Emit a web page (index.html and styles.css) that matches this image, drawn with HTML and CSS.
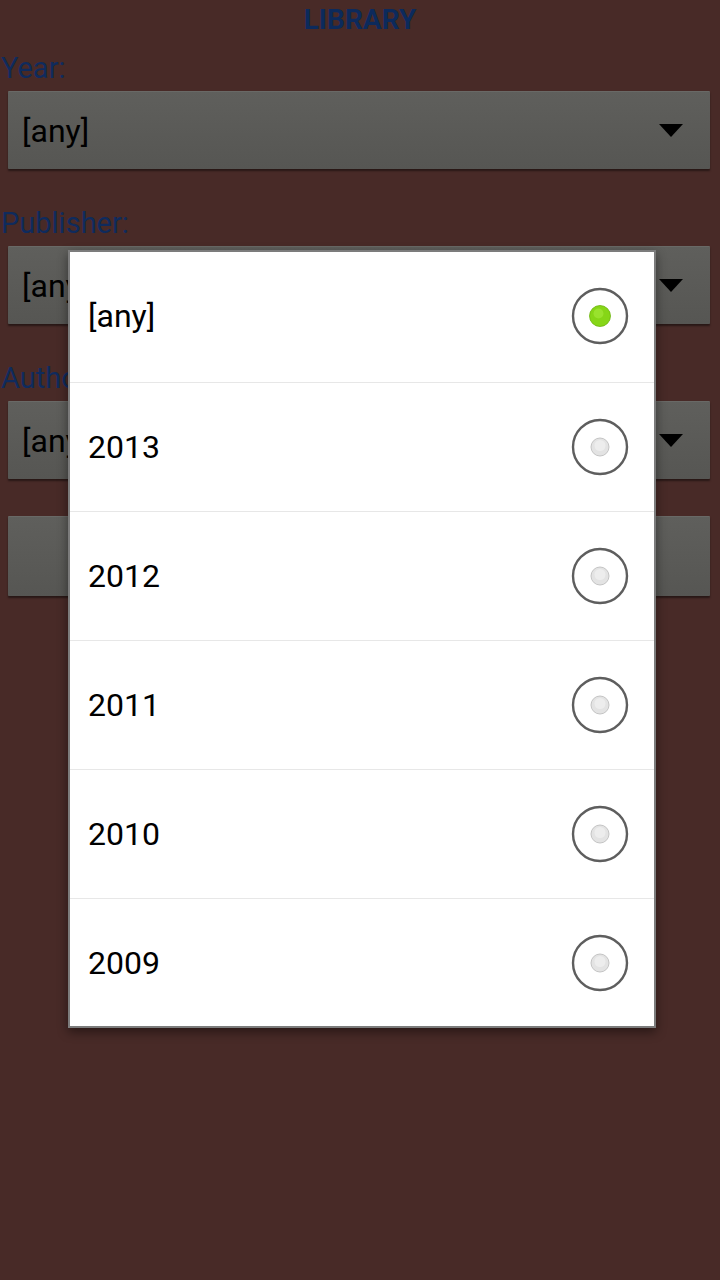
FILE: index.html
```html
<!DOCTYPE html>
<html lang="en">
<head>
    <meta charset="UTF-8">
    <meta name="viewport" content="width=device-width, initial-scale=1.0">
    <title>Library</title>
    <link rel="stylesheet" href="styles.css">
</head>
<body>
    <h1 class="title">LIBRARY</h1>
    <div class="filters">
        <div class="field">
            <label>Year:</label>
            <div class="spinner"><span>[any]</span><span class="arrow"></span></div>
        </div>
        <div class="field">
            <label>Publisher:</label>
            <div class="spinner"><span>[any]</span><span class="arrow"></span></div>
        </div>
        <div class="field">
            <label>Author:</label>
            <div class="spinner"><span>[any]</span><span class="arrow"></span></div>
        </div>
        <button class="search"></button>
    </div>

    <div class="dialog">
        <ul class="options">
            <li class="option">
                <span>[any]</span>
                <svg class="radio" width="58" height="58" viewBox="0 0 58 58">
                    <circle cx="29" cy="29" r="27" fill="#fff" stroke="#5e5e5e" stroke-width="2.4"/>
                    <circle cx="29" cy="29" r="10.5" fill="#86d617" stroke="#6cb40c" stroke-width="0.8"/>
                    <circle cx="27.5" cy="26.5" r="5" fill="#a6ea3c" opacity="0.6"/>
                </svg>
            </li>
            <li class="option">
                <span>2013</span>
                <svg class="radio" width="58" height="58" viewBox="0 0 58 58">
                    <circle cx="29" cy="29" r="27" fill="#fff" stroke="#5e5e5e" stroke-width="2.4"/>
                    <circle cx="29" cy="29" r="9" fill="#e3e3e3" stroke="#c4c4c4" stroke-width="1"/>
                    <circle cx="29" cy="27.5" r="5.5" fill="#ededed"/>
                </svg>
            </li>
            <li class="option">
                <span>2012</span>
                <svg class="radio" width="58" height="58" viewBox="0 0 58 58">
                    <circle cx="29" cy="29" r="27" fill="#fff" stroke="#5e5e5e" stroke-width="2.4"/>
                    <circle cx="29" cy="29" r="9" fill="#e3e3e3" stroke="#c4c4c4" stroke-width="1"/>
                    <circle cx="29" cy="27.5" r="5.5" fill="#ededed"/>
                </svg>
            </li>
            <li class="option">
                <span>2011</span>
                <svg class="radio" width="58" height="58" viewBox="0 0 58 58">
                    <circle cx="29" cy="29" r="27" fill="#fff" stroke="#5e5e5e" stroke-width="2.4"/>
                    <circle cx="29" cy="29" r="9" fill="#e3e3e3" stroke="#c4c4c4" stroke-width="1"/>
                    <circle cx="29" cy="27.5" r="5.5" fill="#ededed"/>
                </svg>
            </li>
            <li class="option">
                <span>2010</span>
                <svg class="radio" width="58" height="58" viewBox="0 0 58 58">
                    <circle cx="29" cy="29" r="27" fill="#fff" stroke="#5e5e5e" stroke-width="2.4"/>
                    <circle cx="29" cy="29" r="9" fill="#e3e3e3" stroke="#c4c4c4" stroke-width="1"/>
                    <circle cx="29" cy="27.5" r="5.5" fill="#ededed"/>
                </svg>
            </li>
            <li class="option">
                <span>2009</span>
                <svg class="radio" width="58" height="58" viewBox="0 0 58 58">
                    <circle cx="29" cy="29" r="27" fill="#fff" stroke="#5e5e5e" stroke-width="2.4"/>
                    <circle cx="29" cy="29" r="9" fill="#e3e3e3" stroke="#c4c4c4" stroke-width="1"/>
                    <circle cx="29" cy="27.5" r="5.5" fill="#ededed"/>
                </svg>
            </li>
        </ul>
    </div>
</body>
</html>
```

FILE: styles.css
```css
body {
    font-family: Roboto, "Liberation Sans", sans-serif;
    margin: 0;
    padding: 0;
    background-color: #482a27;
    height: 1280px;
    overflow: hidden;
    position: relative;
}

.title {
    margin: 0;
    height: 40px;
    line-height: 40px;
    font-size: 28px;
    font-weight: bold;
    text-align: center;
    color: #0c2a5c;
}

.filters {
    display: flex;
    flex-direction: column;
    gap: 37px;
    padding-top: 11px;
}

.field {
    display: flex;
    flex-direction: column;
    gap: 6px;
}

.field label {
    display: block;
    margin-left: 1px;
    font-size: 29px;
    line-height: 34px;
    color: #0f2b5d;
}

.spinner,
.search {
    margin: 0 10px 0 8px;
    background: linear-gradient(#5f5f5c, #565653);
    border-top: 1px solid #696966;
    box-shadow: 0px 2px 2px rgba(0, 0, 0, 0.45);
    border-radius: 1px;
}

.spinner {
    height: 77px;
    display: flex;
    align-items: center;
    justify-content: space-between;
    padding: 0 27px 0 14px;
    font-size: 32px;
    color: #000;
}

.arrow {
    width: 0;
    height: 0;
    border-left: 12px solid transparent;
    border-right: 12px solid transparent;
    border-top: 13px solid #000;
}

.search {
    height: 80px;
    border-left: none;
    border-right: none;
    border-bottom: none;
    padding: 0;
}

.dialog {
    position: absolute;
    left: 68px;
    top: 250px;
    width: 584px;
    height: 774px;
    background-color: #fff;
    border: 2px solid #7c7c7c;
    box-shadow: 0px 4px 10px rgba(0, 0, 0, 0.45);
}

.options {
    list-style: none;
    margin: 0;
    padding: 0;
}

.option {
    height: 129px;
    box-sizing: border-box;
    display: flex;
    align-items: center;
    justify-content: space-between;
    padding: 0 25px 0 18px;
    border-top: 1px solid #e7e7e7;
    font-size: 32px;
    color: #000;
}

.option:first-child {
    border-top: none;
    height: 130px;
    padding-bottom: 2px;
}

.radio {
    display: block;
}
```
